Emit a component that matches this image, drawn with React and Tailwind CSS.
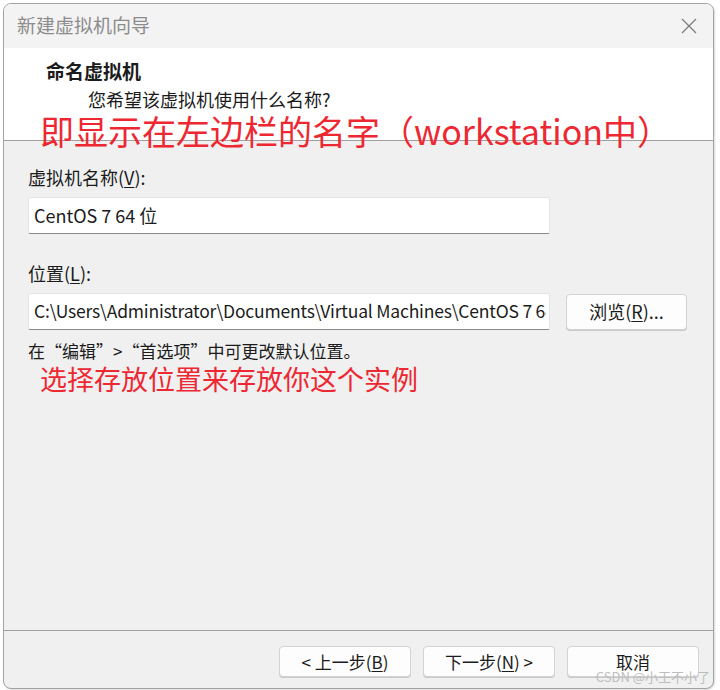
import React from 'react';

const font = { fontFamily: '"Noto Sans CJK SC", "Liberation Sans", sans-serif' };

const Mn = ({ children }) => <span className="underline underline-offset-2">{children}</span>;

const Btn = ({ children }) => (
  <button className="w-[132px] h-[31px] rounded-[4px] border border-[#d3d3d3] bg-[#fdfdfd] text-[17px] text-[#1b1b1b] flex items-center justify-center shadow-[0_1px_0_#c8c8c8]">
    {children}
  </button>
);

export default function App() {
  return (
    <div className="w-[720px] h-[690px] bg-white p-[3px] text-[#1b1b1b]" style={font}>
      <div className="relative w-[711px] h-[686px] rounded-[8px] border border-[#a3a3a3] overflow-hidden flex flex-col bg-[#f0f0f0] shadow-[1px_1px_2px_rgba(0,0,0,0.15)]">
        {/* title bar */}
        <div className="h-[44px] shrink-0 bg-[#f3f3f3] flex items-center justify-between pl-[13px] pr-[16px]">
          <span className="text-[19px] text-[#8c8c8c] -mt-[2px]">新建虚拟机向导</span>
          <svg width="16" height="16" viewBox="0 0 16 16" className="text-[#7a7a7a]">
            <path d="M1 1 L15 15 M15 1 L1 15" stroke="currentColor" strokeWidth="1.2" fill="none" />
          </svg>
        </div>

        {/* header */}
        <div className="h-[93px] shrink-0 bg-white border-b border-[#a0a0a0] pl-[42px] pt-[10px] relative">
          <div className="text-[19px] font-bold leading-[26px]">命名虚拟机</div>
          <div className="text-[18px] leading-[26px] pl-[42px] mt-[2px]">您希望该虚拟机使用什么名称?</div>
          <div className="relative z-10 text-[34px] leading-[40px] text-[#ee2832] -ml-[6px] -mt-[1px] whitespace-nowrap">
            即显示在左边栏的名字（workstation中）
          </div>
        </div>

        {/* body */}
        <div className="flex-1 pl-[24px] pt-[24px]">
          <div className="text-[18px] leading-[24px]">
            虚拟机名称(<Mn>V</Mn>):
          </div>
          <div className="mt-[8px] w-[522px] h-[37px] bg-white border border-[#e4e4e4] border-b-[#8a8a8a] rounded-[2px] flex items-center pl-[5px] text-[18px]">
            CentOS 7 64 位
          </div>

          <div className="mt-[27px] text-[18px] leading-[24px]">
            位置(<Mn>L</Mn>):
          </div>
          <div className="mt-[8px] flex items-center gap-[16px]">
            <div className="w-[522px] h-[37px] bg-white border border-[#e4e4e4] border-b-[#8a8a8a] rounded-[2px] flex items-center pl-[5px] pr-[3px] text-[17.5px] tracking-[-0.2px] overflow-hidden whitespace-nowrap">
              <span className="overflow-hidden">C:\Users\Administrator\Documents\Virtual Machines\CentOS 7 64 位</span>
            </div>
            <button className="w-[121px] h-[36px] rounded-[4px] border border-[#d3d3d3] bg-[#fdfdfd] text-[18px] flex items-center justify-center shadow-[0_1px_0_#c8c8c8]">
              浏览(<Mn>R</Mn>)...
            </button>
          </div>

          <div className="mt-[9px] text-[17px] leading-[24px]">在“编辑”&gt;“首选项”中可更改默认位置。</div>
          <div className="text-[27px] leading-[32px] text-[#ee2832] pl-[12px]">选择存放位置来存放你这个实例</div>
        </div>

        {/* footer */}
        <div className="h-[58px] shrink-0 border-t border-[#a0a0a0] flex justify-end items-start gap-[12px] pt-[15px] pr-[14px]">
          <Btn>&lt; 上一步(<Mn>B</Mn>)</Btn>
          <Btn>下一步(<Mn>N</Mn>) &gt;</Btn>
          <Btn>取消</Btn>
        </div>

        <div className="absolute right-[3px] bottom-[4px] text-[13px] leading-[14px] text-[#bdbdbd]">CSDN @小王不小了</div>
      </div>
    </div>
  );
}
